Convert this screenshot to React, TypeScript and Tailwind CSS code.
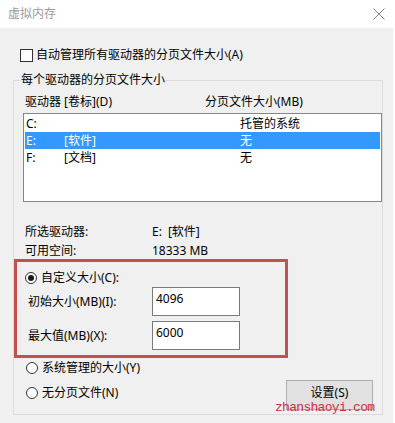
import React from 'react';

function Radio({ checked = false }: { checked?: boolean }) {
  return (
    <span className="flex h-[12px] w-[12px] shrink-0 items-center justify-center rounded-full border border-[#333333] bg-white">
      {checked && <span className="h-[6px] w-[6px] rounded-full bg-[#1a1a1a]" />}
    </span>
  );
}

const drives = [
  { letter: 'C:', label: '', size: '托管的系统' },
  { letter: 'E:', label: '[软件]', size: '无', selected: true },
  { letter: 'F:', label: '[文档]', size: '无' },
];

export default function App() {
  return (
    <div className="relative h-[423px] w-[395px] overflow-hidden bg-white font-['Noto_Sans','Noto_Sans_CJK_SC',sans-serif] text-[12px] text-black">
      {/* title bar */}
      <div className="flex h-[28px] items-center justify-between bg-white pl-[8px] pr-[10px]">
        <span className="leading-[16px] text-[#9a9a9a]">虚拟内存</span>
        <svg width="12" height="12" viewBox="0 0 12 12" className="text-[#8a8a8a]">
          <path d="M0.5 0.5 L11.5 11.5 M11.5 0.5 L0.5 11.5" stroke="currentColor" strokeWidth="1" />
        </svg>
      </div>

      <div className="mr-[2px] h-[395px] bg-[#f0f0f0] pt-[19px]">
        {/* auto manage */}
        <div className="flex items-center gap-[3px] pl-[20px] leading-[16px]">
          <span className="h-[13px] w-[13px] border border-[#333333] bg-white" />
          <span>自动管理所有驱动器的分页文件大小(A)</span>
        </div>

        <fieldset className="ml-[13px] mt-[9px] w-[368px] border border-[#dcdcdc] pb-[4px]">
          <legend className="ml-[7px] leading-[16px]">每个驱动器的分页文件大小</legend>

          <div className="mt-[6px] flex pl-[11px] leading-[16px]">
            <span className="w-[180px]">驱动器 [卷标](D)</span>
            <span>分页文件大小(MB)</span>
          </div>

          {/* drive list */}
          <div className="ml-[9px] mt-[3px] h-[89px] w-[359px] border border-[#828790] bg-white p-[1px]">
            {drives.map((d) => (
              <div
                key={d.letter}
                className={`flex h-[17px] items-center pl-[1px] leading-[17px] ${
                  d.selected ? 'bg-[#3399ff] text-white' : ''
                }`}
              >
                <span className="w-[38px]">{d.letter}</span>
                <span className="w-[176px]">{d.label}</span>
                <span>{d.size}</span>
              </div>
            ))}
          </div>

          <div className="mt-[21px] flex flex-col gap-[1px] pl-[11px] leading-[18px]">
            <div className="flex">
              <span className="w-[127px]">所选驱动器:</span>
              <span>E:</span>
              <span className="ml-[6px]">[软件]</span>
            </div>
            <div className="flex">
              <span className="w-[127px]">可用空间:</span>
              <span>18333 MB</span>
            </div>
          </div>

          {/* custom size, outlined in red */}
          <div className="-mt-[1px] w-[274px] border-[3px] border-[#c4504c] pb-[5px] pt-[8px]">
            <div className="flex items-center gap-[4px] pl-[8px] leading-[16px]">
              <Radio checked />
              <span>自定义大小(C):</span>
            </div>
            <div className="mt-[1px] flex items-center pl-[11px]">
              <span className="w-[124px] leading-[16px]">初始大小(MB)(I):</span>
              <div className="h-[29px] w-[88px] border border-[#7a7a7a] bg-white pl-[3px] pt-[3px] leading-[16px]">
                4096
              </div>
            </div>
            <div className="mt-[5px] flex items-center pl-[11px]">
              <span className="w-[124px] leading-[16px]">最大值(MB)(X):</span>
              <div className="h-[29px] w-[88px] border border-[#7a7a7a] bg-white pl-[3px] pt-[3px] leading-[16px]">
                6000
              </div>
            </div>
          </div>

          <div className="mt-[2px] flex items-center gap-[4px] pl-[12px] leading-[16px]">
            <Radio />
            <span>系统管理的大小(Y)</span>
          </div>

          <div className="mt-[4px] flex items-center justify-between pl-[12px] pr-[9px]">
            <div className="-mt-[4px] flex items-center gap-[4px] leading-[16px]">
              <Radio />
              <span>无分页文件(N)</span>
            </div>
            <button className="flex h-[30px] w-[87px] items-start justify-center border border-[#adadad] bg-[#e1e1e1] pt-[4px] leading-[16px]">
              设置(S)
            </button>
          </div>
        </fieldset>
      </div>

      {/* watermark */}
      <span className="absolute left-[275px] top-[400px] font-['Liberation_Mono',monospace] text-[13px] leading-[16px] tracking-[-0.7px] text-[#cc3040]">
        zhanshaoyi.com
      </span>
    </div>
  );
}
